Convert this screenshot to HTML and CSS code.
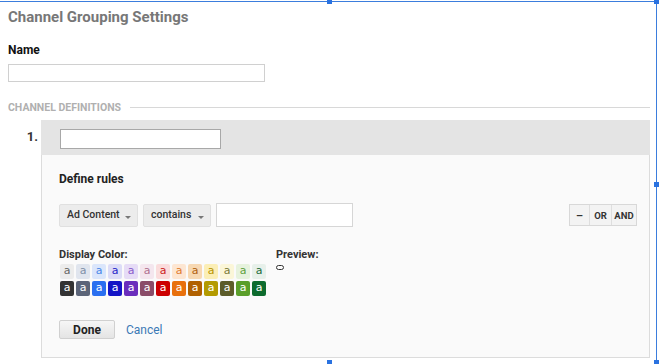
FILE: index.html
```html
<!DOCTYPE html>
<html>
<head>
<meta charset="utf-8">
<link rel="stylesheet" href="styles.css">
</head>
<body>
<div class="page">
  <h1 class="title">Channel Grouping Settings</h1>
  <div class="field-label">Name</div>
  <input class="name-input" type="text">
  <div class="section-head">
    <span class="section-text">CHANNEL DEFINITIONS</span>
    <span class="section-line"></span>
  </div>
  <div class="channel">
    <div class="channel-num">1.</div>
    <div class="channel-box">
      <div class="box-header">
        <input class="channel-input" type="text">
      </div>
      <div class="box-body">
        <div class="rules-title">Define rules</div>
        <div class="rule-row">
          <div class="rule-left">
            <div class="dropdown dd-dim">Ad Content<span class="caret"></span></div>
            <div class="dropdown dd-op">contains<span class="caret"></span></div>
            <input class="rule-input" type="text">
          </div>
          <div class="btn-group">
            <span class="seg seg-minus">&#8211;</span>
            <span class="seg seg-or">OR</span>
            <span class="seg seg-and">AND</span>
          </div>
        </div>
        <div class="color-row">
          <div class="color-col">
            <div class="color-label">Display Color:</div>
            <div class="swatches">
              <span class="sw l1">a</span><span class="sw l2">a</span><span class="sw l3">a</span><span class="sw l4">a</span><span class="sw l5">a</span><span class="sw l6">a</span><span class="sw l7">a</span><span class="sw l8">a</span><span class="sw l9">a</span><span class="sw l10">a</span><span class="sw l11">a</span><span class="sw l12">a</span><span class="sw l13">a</span>
              <span class="sw d1">a</span><span class="sw d2">a</span><span class="sw d3">a</span><span class="sw d4">a</span><span class="sw d5">a</span><span class="sw d6">a</span><span class="sw d7">a</span><span class="sw d8">a</span><span class="sw d9">a</span><span class="sw d10">a</span><span class="sw d11">a</span><span class="sw d12">a</span><span class="sw d13">a</span>
            </div>
          </div>
          <div class="preview-col">
            <div class="color-label">Preview:</div>
            <span class="preview-chip"></span>
          </div>
        </div>
        <div class="actions">
          <button class="done-btn">Done</button>
          <a class="cancel-link">Cancel</a>
        </div>
      </div>
    </div>
  </div>
</div>
<div class="selection">
  <span class="handle h-tl"></span>
  <span class="handle h-tm"></span>
  <span class="handle h-tr"></span>
  <span class="handle h-ml"></span>
  <span class="handle h-mr"></span>
  <span class="handle h-bm"></span>
  <span class="handle h-br"></span>
</div>
</body>
</html>
```
FILE: styles.css
```css
html, body {
  margin: 0;
  padding: 0;
  background: #ffffff;
  width: 661px;
  height: 364px;
  overflow: hidden;
}
body {
  font-family: Roboto, "Liberation Sans", Arial, sans-serif;
  color: #222;
  position: relative;
}
.page {
  padding: 8px 11px 0 8px;
}
.title {
  margin: 0;
  font-size: 15px;
  font-weight: 700;
  color: #777;
  line-height: 19px;
}
.field-label {
  margin-top: 16px;
  font-size: 12px;
  font-weight: 700;
  color: #111;
  line-height: 14px;
}
.name-input {
  display: block;
  margin: 7px 0 0 0;
  width: 257px;
  height: 18px;
  box-sizing: border-box;
  border: 1px solid #d0d0d0;
  background: #fff;
  padding: 0;
}
.section-head {
  display: flex;
  align-items: center;
  gap: 9px;
  margin-top: 19px;
  height: 12px;
}
.section-text {
  font-size: 10.5px;
  font-weight: 700;
  color: #b0b0b0;
  letter-spacing: 0;
  white-space: nowrap;
}
.section-line {
  flex: 1;
  height: 1px;
  background: #d8d8d8;
}
.channel {
  display: flex;
  margin-top: 7px;
  margin-left: -8px;
}
.channel-num {
  width: 38px;
  padding-right: 3px;
  text-align: right;
  font-size: 13px;
  font-weight: 700;
  color: #333;
  padding-top: 9px;
  line-height: 15px;
}
.channel-box {
  flex: 1;
  display: flex;
  flex-direction: column;
}
.box-header {
  background: #e4e4e4;
  height: 35px;
  box-sizing: border-box;
  padding: 9px 0 0 19px;
}
.channel-input {
  display: block;
  width: 161px;
  height: 20px;
  box-sizing: border-box;
  border: 1px solid #a8a8a8;
  background: #fff;
  padding: 0;
  margin: 0;
}
.box-body {
  background: #fafafa;
  border: 1px solid #dcdcdc;
  border-top: none;
  height: 203px;
  box-sizing: border-box;
  padding: 17px 12px 0 17px;
}
.rules-title {
  font-size: 12px;
  font-weight: 700;
  color: #222;
  line-height: 14px;
}
.rule-row {
  display: flex;
  justify-content: space-between;
  align-items: center;
  margin-top: 17px;
}
.rule-left {
  display: flex;
  gap: 5px;
  align-items: center;
}
.dropdown {
  height: 23px;
  box-sizing: border-box;
  background: #ececec;
  border: 1px solid #e0e0e0;
  border-radius: 2px;
  font-size: 10.5px;
  font-weight: 500;
  color: #333;
  display: flex;
  align-items: center;
  padding: 0 0 1px 7px;
  position: relative;
}
.dd-dim { width: 79px; }
.dd-op { width: 68px; }
.caret {
  position: absolute;
  right: 6px;
  top: 11px;
  width: 0;
  height: 0;
  border-left: 3px solid transparent;
  border-right: 3px solid transparent;
  border-top: 3px solid #777;
}
.rule-input {
  width: 137px;
  height: 24px;
  box-sizing: border-box;
  border: 1px solid #d6d6d6;
  background: #fff;
  padding: 0;
  margin: 0;
}
.btn-group {
  display: flex;
  height: 22px;
  border: 1px solid #d8d8d8;
  box-sizing: border-box;
  background: #f3f3f3;
}
.seg {
  display: flex;
  align-items: center;
  justify-content: center;
  font-size: 9.5px;
  font-weight: 700;
  color: #333;
  border-left: 1px solid #dedede;
}
.seg-minus { width: 19px; border-left: none; font-size: 11px; }
.seg-or { width: 21px; }
.seg-and { width: 24px; }
.color-row {
  display: flex;
  margin-top: 21px;
  gap: 10px;
}
.color-label {
  font-size: 11px;
  font-weight: 700;
  color: #333;
  line-height: 13px;
}
.swatches {
  display: grid;
  grid-template-columns: repeat(13, 14px);
  column-gap: 2px;
  row-gap: 2px;
  margin-top: 3px;
  margin-left: 1px;
}
.sw {
  height: 15px;
  font-size: 11px;
  line-height: 14px;
  text-align: center;
  border-radius: 2px;
  font-family: "DejaVu Sans", Roboto, sans-serif;
}
.l1 { background: #ececec; color: #666; }
.l2 { background: #e0e5ee; color: #8090a8; }
.l3 { background: #dbe6fb; color: #4a86e8; }
.l4 { background: #dcdcf7; color: #2525c8; }
.l5 { background: #e6dcf6; color: #8a5ccc; }
.l6 { background: #f4e6ee; color: #b07090; }
.l7 { background: #fadcdc; color: #cc2222; }
.l8 { background: #fde6d2; color: #e07a2f; }
.l9 { background: #f7d8b2; color: #b06010; }
.l10 { background: #fbeeb6; color: #b89400; }
.l11 { background: #fbf6d8; color: #7a7a38; }
.l12 { background: #e6f2dd; color: #5fa040; }
.l13 { background: #e7f0ea; color: #1d6b3a; }
.d1 { background: #333333; color: #fff; }
.d2 { background: #5b6478; color: #fff; }
.d3 { background: #2a6ff0; color: #fff; }
.d4 { background: #1414c6; color: #fff; }
.d5 { background: #6a2dbc; color: #fff; }
.d6 { background: #8a4c68; color: #fff; }
.d7 { background: #cc0000; color: #fff; }
.d8 { background: #e8700c; color: #fff; }
.d9 { background: #b06000; color: #fff; }
.d10 { background: #b39a00; color: #fff; }
.d11 { background: #5c5c2a; color: #fff; }
.d12 { background: #5a9e2a; color: #fff; }
.d13 { background: #0d6b2e; color: #fff; }
.preview-col {
  display: flex;
  flex-direction: column;
  align-items: flex-start;
}
.preview-chip {
  display: block;
  margin-top: 4px;
  width: 6px;
  height: 3px;
  border: 1px solid #333;
  border-radius: 3px;
}
.actions {
  display: flex;
  align-items: center;
  gap: 11px;
  margin-top: 24px;
}
.done-btn {
  width: 56px;
  height: 19px;
  box-sizing: border-box;
  border: 1px solid #d0d0d0;
  border-radius: 2px;
  background: linear-gradient(#f6f6f6, #e4e4e4);
  font-family: Roboto, "Liberation Sans", Arial, sans-serif;
  font-size: 12px;
  font-weight: 700;
  color: #222;
  padding: 0;
}
.cancel-link {
  font-size: 12px;
  color: #3a79b5;
  text-decoration: none;
}
.selection {
  position: absolute;
  left: -3px;
  top: 1px;
  width: 660px;
  height: 362px;
  border-top: 1px solid #3b7ddd;
  border-right: 1px solid #3b7ddd;
  border-left: 1px solid #3b7ddd;
  box-sizing: border-box;
  pointer-events: none;
}
.handle {
  position: absolute;
  width: 5px;
  height: 5px;
  background: #2a72e0;
}
.h-tl { left: -3px; top: -3px; }
.h-tm { left: 329px; top: -3px; }
.h-tr { right: -3px; top: -3px; }
.h-ml { left: -3px; top: 180px; }
.h-mr { right: -3px; top: 180px; }
.h-bm { left: 329px; top: 358px; }
.h-br { right: -3px; top: 358px; }
```
